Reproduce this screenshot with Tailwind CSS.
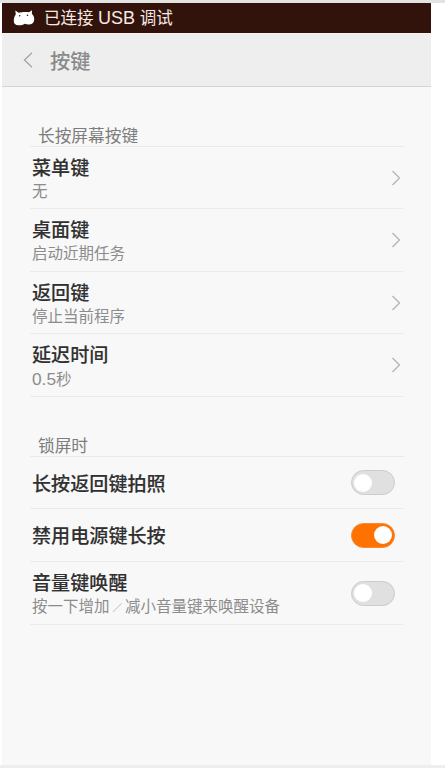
<!DOCTYPE html>
<html lang="zh-CN">
<head>
<meta charset="utf-8">
<title>按键</title>
<script src="https://cdn.jsdelivr.net/npm/@tailwindcss/browser@4"></script>
</head>
<body class="h-[768px] overflow-hidden bg-white font-['Liberation_Sans','Noto_Sans_CJK_SC',sans-serif] flex flex-col">
<div class="h-[3px] bg-[#e3e3e4] shrink-0"></div>
<div class="ml-[2px] w-[429px] flex-1 bg-[#f8f8f8]">
  <div class="h-[30px] bg-[#32130b] flex items-center pl-[11px]">
    <svg class="w-[22px] h-[18px] shrink-0" viewBox="0 0 22 18" fill="none">
      <path d="M2.300 1.600 5.600 3.700C8.500 2.900 13 2.700 16 3.200L19 1.200 18.900 4.700C20.600 6.500 21.400 8.400 21.200 10.800 21 13.400 19.600 15.300 16.500 15.500 14.600 15.600 13.200 15.400 11.800 14.800 9.800 16 8 16.400 5.600 16.300 2.300 16.200.7 14.600.8 12 .8 9.500 1.400 7.300 2.800 5.600Z" fill="#fff"/>
      <circle cx="6.600" cy="6.800" r=".8" fill="#32130b"/><circle cx="14.500" cy="6.300" r=".8" fill="#32130b"/>
    </svg>
    <span class="ml-[9px] text-[16.500px] leading-[30px] text-[#f6e9e4] whitespace-nowrap">已连接 <span class="text-[18px]">USB</span> 调试</span>
  </div>
  <div class="h-[54px] bg-[#eeeeee] border-t border-t-[#f8f3f2] border-b border-b-[#d4d4d4] flex items-center pl-[21px]">
    <svg class="w-[10px] h-[16px]" viewBox="0 0 10 16" fill="none" stroke="#a3a3a3" stroke-width="1.300"><path d="M9 .8 1.500 8 9 15.200"/></svg>
    <h1 class="ml-[17px] pt-[3px] text-[20.300px] leading-[30px] text-[#8a8a8a] font-medium">按键</h1>
  </div>

  <main class="ml-[28px] w-[374px]">
    <h2 class="h-[60px] pt-[38px] pl-[8px] text-[16.700px] leading-[24px] text-[#7d7d7d] border-b border-[#e9e9e9]">长按屏幕按键</h2>
    <div class="h-[62px] pl-[2px] pr-[3px] flex items-center justify-between border-b border-[#ececec]">
      <div class="flex flex-col pt-[4px]"><span class="text-[19.100px] leading-[24px] font-medium text-[#303030] [-webkit-text-stroke:0.1px_#303030]">菜单键</span><span class="text-[15.500px] leading-[22px] text-[#8c8c8c]">无</span></div>
      <svg class="w-[10px] h-[16px]" viewBox="0 0 10 16" fill="none" stroke="#b5b5b5" stroke-width="1.300"><path d="M1.500 1 8.500 8 1.500 15"/></svg>
    </div>
    <div class="h-[63px] pl-[2px] pr-[3px] flex items-center justify-between border-b border-[#ececec]">
      <div class="flex flex-col pt-[4px]"><span class="text-[19.100px] leading-[24px] font-medium text-[#303030] [-webkit-text-stroke:0.1px_#303030]">桌面键</span><span class="text-[15.500px] leading-[22px] text-[#8c8c8c]">启动近期任务</span></div>
      <svg class="w-[10px] h-[16px]" viewBox="0 0 10 16" fill="none" stroke="#b5b5b5" stroke-width="1.300"><path d="M1.500 1 8.500 8 1.500 15"/></svg>
    </div>
    <div class="h-[62px] pl-[2px] pr-[3px] flex items-center justify-between border-b border-[#ececec]">
      <div class="flex flex-col pt-[4px]"><span class="text-[19.100px] leading-[24px] font-medium text-[#303030] [-webkit-text-stroke:0.1px_#303030]">返回键</span><span class="text-[15.500px] leading-[22px] text-[#8c8c8c]">停止当前程序</span></div>
      <svg class="w-[10px] h-[16px]" viewBox="0 0 10 16" fill="none" stroke="#b5b5b5" stroke-width="1.300"><path d="M1.500 1 8.500 8 1.500 15"/></svg>
    </div>
    <div class="h-[63px] pl-[2px] pr-[3px] flex items-center justify-between border-b border-[#ececec]">
      <div class="flex flex-col pt-[4px]"><span class="text-[19.100px] leading-[24px] font-medium text-[#303030] [-webkit-text-stroke:0.1px_#303030]">延迟时间</span><span class="text-[15.500px] leading-[22px] text-[#8c8c8c]"><span class="text-[17.300px]">0.5</span>秒</span></div>
      <svg class="w-[10px] h-[16px]" viewBox="0 0 10 16" fill="none" stroke="#b5b5b5" stroke-width="1.300"><path d="M1.500 1 8.500 8 1.500 15"/></svg>
    </div>

    <h2 class="h-[60px] pt-[38px] pl-[8px] text-[16.700px] leading-[24px] text-[#7d7d7d] border-b border-[#e9e9e9]">锁屏时</h2>
    <div class="h-[52px] pl-[2px] pr-[9px] flex items-center justify-between border-b border-[#ececec]">
      <span class="pt-[4px] text-[19.100px] leading-[24px] font-medium text-[#303030] [-webkit-text-stroke:0.1px_#303030]">长按返回键拍照</span>
      <span class="w-[44px] h-[25px] rounded-full bg-[#e0e0e0] border border-[#d2cbc4] flex items-center pl-[2px]"><span class="size-[18px] rounded-full bg-white"></span></span>
    </div>
    <div class="h-[53px] pl-[2px] pr-[9px] flex items-center justify-between border-b border-[#ececec]">
      <span class="pt-[4px] text-[19.100px] leading-[24px] font-medium text-[#303030] [-webkit-text-stroke:0.1px_#303030]">禁用电源键长按</span>
      <span class="w-[44px] h-[25px] rounded-full bg-[#ff7200] border border-[#f58a35] flex items-center justify-end pr-[2px]"><span class="size-[18px] rounded-full bg-white"></span></span>
    </div>
    <div class="h-[63px] pl-[2px] pr-[9px] flex items-center justify-between border-b border-[#ececec]">
      <div class="flex flex-col pt-[4px]"><span class="text-[19.100px] leading-[24px] font-medium text-[#303030] [-webkit-text-stroke:0.1px_#303030]">音量键唤醒</span><span class="text-[15.500px] leading-[22px] text-[#8c8c8c] whitespace-nowrap">按一下增加<span class="inline-block w-[15.500px] text-center text-[10px] leading-[16px]">／</span>减小音量键来唤醒设备</span></div>
      <span class="w-[44px] h-[25px] rounded-full bg-[#e0e0e0] border border-[#d2cbc4] flex items-center pl-[2px]"><span class="size-[18px] rounded-full bg-white"></span></span>
    </div>
  </main>
</div>
<div class="h-[3px] bg-[#eeeeee] shrink-0"></div>
</body>
</html>
